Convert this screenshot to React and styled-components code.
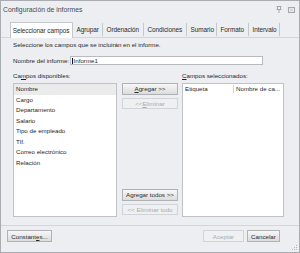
import React from "react";
import styled, { createGlobalStyle } from "styled-components";

const GlobalStyle = createGlobalStyle`
  html, body {
    margin: 0;
    padding: 0;
    background: #eceef1;
  }
  body {
    font-family: "Liberation Sans", Arial, sans-serif;
  }
`;

const Window = styled.div`
  width: 300px;
  height: 253px;
  box-sizing: border-box;
  border: 1px solid #a9adb2;
  background: #eceef1;
  display: flex;
  flex-direction: column;
  color: #1f1f1f;
  font-size: 6.2px;
  overflow: hidden;
`;

const TitleBar = styled.div`
  height: 21px;
  box-sizing: border-box;
  padding: 0 4px 4px 2px;
  display: flex;
  align-items: center;
  gap: 6px;
`;

const Title = styled.div`
  flex: 1;
  font-size: 6.8px;
  color: #4a4a4a;
`;

const TabStrip = styled.div`
  height: 15px;
  display: flex;
  padding-left: 9px;
  position: relative;
  z-index: 1;
`;

const Tab = styled.div`
  width: ${(p) => p.$w}px;
  box-sizing: border-box;
  font-size: 6.4px;
  letter-spacing: -0.05px;
  white-space: nowrap;
  display: flex;
  align-items: center;
  padding-left: ${(p) => (p.$active ? 1.7 : 3.5)}px;
  background: ${(p) => (p.$active ? "#ffffff" : "transparent")};
  border: ${(p) => (p.$active ? "1px solid #c4c8cd" : "none")};
  border-bottom: none;
  border-right: 1px solid #c4c8cd;
  margin: ${(p) => (p.$active ? "0 0 -1px 0" : "1px 0 1px 0")};
  color: #2a2a2a;
`;

const Panel = styled.div`
  height: 188px;
  box-sizing: border-box;
  border-top: 1px solid #d2d5d9;
  padding: 3px 12px 0 12px;
  display: flex;
  flex-direction: column;
`;

const Line = styled.div`
  height: 8px;
  line-height: 8px;
  white-space: nowrap;
`;

const NameRow = styled.div`
  display: flex;
  align-items: center;
  height: 9px;
  margin-top: 7px;
`;

const Label = styled.div`
  width: ${(p) => (p.$w ? `${p.$w}px` : "auto")};
  white-space: nowrap;
`;

const TextInput = styled.div`
  width: 193px;
  height: 9px;
  box-sizing: border-box;
  border: 1px solid #b7bbc0;
  background: #ffffff;
  display: flex;
  align-items: center;
  padding-left: 1px;
  line-height: 7px;
`;

const Caret = styled.span`
  width: 1px;
  height: 6px;
  background: #111;
  margin-right: 0.5px;
`;

const LabelsRow = styled.div`
  display: flex;
  height: 8px;
  line-height: 8px;
  margin-top: 7px;
`;

const ListsRow = styled.div`
  display: flex;
  height: 134px;
  margin-top: 3px;
`;

const ListBox = styled.div`
  width: ${(p) => p.$w}px;
  box-sizing: border-box;
  border: 1px solid #bfc3c8;
  background: #ffffff;
  display: flex;
  flex-direction: column;
`;

const ListItem = styled.div`
  height: 10.5px;
  line-height: 10.5px;
  padding-left: 2px;
  white-space: nowrap;
  background: ${(p) => (p.$selected ? "#ebebeb" : "transparent")};
`;

const Header = styled.div`
  display: flex;
  height: 8px;
  line-height: 8px;
  margin-top: 0.5px;
`;

const HeaderCol = styled.div`
  width: ${(p) => (p.$w ? `${p.$w}px` : "auto")};
  flex: ${(p) => (p.$w ? "none" : 1)};
  box-sizing: border-box;
  padding-left: 2px;
  border-right: ${(p) => (p.$w ? "1px solid #d3d6da" : "none")};
  white-space: nowrap;
`;

const ButtonColumn = styled.div`
  width: 56px;
  margin: 0 4px 0 5px;
  padding-bottom: 2px;
  display: flex;
  flex-direction: column;
  justify-content: space-between;
`;

const ButtonGroup = styled.div`
  display: flex;
  flex-direction: column;
  gap: 3px;
`;

const Button = styled.div`
  width: ${(p) => (p.$w ? `${p.$w}px` : "100%")};
  height: ${(p) => p.$h || 11.5}px;
  box-sizing: border-box;
  display: flex;
  align-items: center;
  justify-content: center;
  white-space: nowrap;
  border: 1px solid ${(p) => (p.$disabled ? "#d0d3d7" : "#aeb1b5")};
  background: ${(p) =>
    p.$disabled ? "#eef0f2" : "linear-gradient(#f7f7f7, #dcdcdc)"};
  color: ${(p) => (p.$disabled ? "#a9acb0" : "#2a2a2a")};
`;

const Footer = styled.div`
  flex: 1;
  border-top: 1px solid #d2d5d9;
  display: flex;
  padding: 4px 1px 0 6px;
`;

const FooterRight = styled.div`
  margin-left: auto;
  display: flex;
  gap: 3px;
  height: 12px;
`;

const Grip = styled.div`
  align-self: flex-end;
  margin: 0 0 1px 11px;
  display: flex;
`;

const U = styled.span`
  text-decoration: underline;
`;

const PinIcon = () => (
  <svg width="6" height="7" viewBox="0 0 6 7">
    <path
      d="M0.5 0.5h5M1.5 0.5v3M4.5 0.5v3M0.5 3.5h5M3 3.5v3.5"
      stroke="#a3a8ad"
      strokeWidth="1"
      fill="none"
    />
  </svg>
);

const BoxIcon = () => (
  <svg width="7" height="6" viewBox="0 0 7 6">
    <rect x="0.5" y="0.5" width="6" height="5" stroke="#a3a8ad" fill="none" />
    <path d="M1.5 1.5l4 3M5.5 1.5l-4 3" stroke="#c2c6ca" strokeWidth="0.8" />
  </svg>
);

const GripIcon = () => (
  <svg width="7" height="7" viewBox="0 0 7 7" fill="#b3b7bb">
    <rect x="5" y="1" width="1" height="1" />
    <rect x="3" y="3" width="1" height="1" />
    <rect x="5" y="3" width="1" height="1" />
    <rect x="1" y="5" width="1" height="1" />
    <rect x="3" y="5" width="1" height="1" />
    <rect x="5" y="5" width="1" height="1" />
  </svg>
);

const tabs = [
  { label: "Seleccionar campos", w: 63, active: true },
  { label: "Agrupar", w: 30 },
  { label: "Ordenación", w: 41 },
  { label: "Condiciones", w: 43 },
  { label: "Sumario", w: 30 },
  { label: "Formato", w: 32 },
  { label: "Intervalo", w: 31 },
];

const fields = [
  "Nombre",
  "Cargo",
  "Departamento",
  "Salario",
  "Tipo de empleado",
  "Tlf.",
  "Correo electrónico",
  "Relación",
];

const App = () => {
  return (
    <>
      <GlobalStyle />
      <Window>
        <TitleBar>
          <Title>Configuración de informes</Title>
          <PinIcon />
          <BoxIcon />
        </TitleBar>

        <TabStrip>
          {tabs.map((t) => (
            <Tab key={t.label} $w={t.w} $active={t.active}>
              {t.label}
            </Tab>
          ))}
        </TabStrip>

        <Panel>
          <Line>Seleccione los campos que se incluirán en el informe.</Line>

          <NameRow>
            <Label $w={57}>Nombre del informe:</Label>
            <TextInput>
              <Caret />
              Informe1
            </TextInput>
          </NameRow>

          <LabelsRow>
            <Label $w={169}>
              Ca<U>m</U>pos disponibles:
            </Label>
            <Label>
              <U>C</U>ampos seleccionados:
            </Label>
          </LabelsRow>

          <ListsRow>
            <ListBox $w={104}>
              {fields.map((f, i) => (
                <ListItem key={f} $selected={i === 0}>
                  {f}
                </ListItem>
              ))}
            </ListBox>

            <ButtonColumn>
              <ButtonGroup>
                <Button $h={11.5}>
                  <U>A</U>gregar &gt;&gt;
                </Button>
                <Button $h={11} $disabled>
                  &lt;&lt; <U>E</U>liminar
                </Button>
              </ButtonGroup>
              <ButtonGroup>
                <Button>Agregar todos &gt;&gt;</Button>
                <Button $disabled>&lt;&lt; Eliminar todo</Button>
              </ButtonGroup>
            </ButtonColumn>

            <ListBox $w={102}>
              <Header>
                <HeaderCol $w={51}>Etiqueta</HeaderCol>
                <HeaderCol>Nombre de ca...</HeaderCol>
              </Header>
            </ListBox>
          </ListsRow>
        </Panel>

        <Footer>
          <Button $w={45} $h={12}>
            Constant<U>e</U>s...
          </Button>
          <FooterRight>
            <Button $w={41} $h={12} $disabled>
              Aceptar
            </Button>
            <Button $w={33} $h={12}>
              Cancelar
            </Button>
          </FooterRight>
          <Grip>
            <GripIcon />
          </Grip>
        </Footer>
      </Window>
    </>
  );
};

export default App;
